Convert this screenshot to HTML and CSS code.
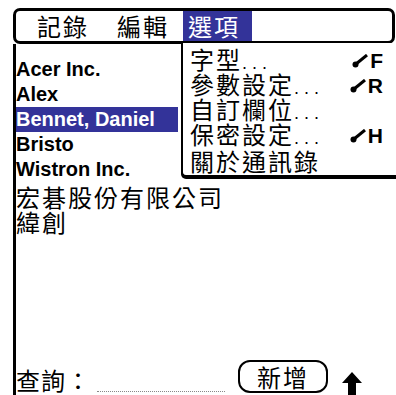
FILE: index.html
```html
<!DOCTYPE html>
<html lang="zh-Hant">
<head>
    <meta charset="UTF-8">
    <title>通訊錄</title>
    <link rel="stylesheet" href="styles.css">
</head>
<body>
    <div id="device">
        <div class="menubar">
            <span class="menu-title">記錄</span>
            <span class="menu-title">編輯</span>
            <span class="menu-title active">選項</span>
        </div>

        <div class="main">
            <ul class="list">
                <li>Acer Inc.</li>
                <li>Alex</li>
                <li class="selected">Bennet, Daniel</li>
                <li>Bristo</li>
                <li>Wistron Inc.</li>
                <li class="cjk">宏碁股份有限公司</li>
                <li class="cjk">緯創</li>
            </ul>

            <div class="footer">
                <span class="label">查詢：</span>
                <span class="field"></span>
                <button type="button" class="btn">新增</button>
                <svg class="arrow" width="20" height="23" viewBox="0 0 20 23">
                    <polygon points="10,0 20,11 14,11 14,23 6,23 6,11 0,11" fill="#000"/>
                </svg>
            </div>
        </div>

        <div class="dropdown">
            <div class="item">
                <span>字型<span class="dots">...</span></span>
                <span class="shortcut"><svg width="16" height="14" viewBox="0 0 16 14"><line x1="4" y1="10" x2="15" y2="1" stroke="#000" stroke-width="3"/><circle cx="3.5" cy="10.5" r="3" fill="#000"/></svg>F</span>
            </div>
            <div class="item">
                <span>參數設定<span class="dots">...</span></span>
                <span class="shortcut"><svg width="16" height="14" viewBox="0 0 16 14"><line x1="4" y1="10" x2="15" y2="1" stroke="#000" stroke-width="3"/><circle cx="3.5" cy="10.5" r="3" fill="#000"/></svg>R</span>
            </div>
            <div class="item">
                <span>自訂欄位<span class="dots">...</span></span>
            </div>
            <div class="item">
                <span>保密設定<span class="dots">...</span></span>
                <span class="shortcut"><svg width="16" height="14" viewBox="0 0 16 14"><line x1="4" y1="10" x2="15" y2="1" stroke="#000" stroke-width="3"/><circle cx="3.5" cy="10.5" r="3" fill="#000"/></svg>H</span>
            </div>
            <div class="item">
                <span>關於通訊錄</span>
            </div>
        </div>
    </div>
</body>
</html>
```

FILE: styles.css
```css
html, body {
    margin: 0;
    padding: 0;
    background-color: #fff;
}

#device {
    position: relative;
    width: 396px;
    height: 395px;
    overflow: hidden;
    font-family: "Noto Sans CJK TC", sans-serif;
    color: #000;
}

.menubar {
    box-sizing: border-box;
    height: 36px;
    margin: 8px 1px 0 13px;
    padding-left: 17px;
    border: 3px solid #000;
    border-radius: 7px;
    display: flex;
    gap: 20px;
    font-size: 24px;
    line-height: 30px;
    letter-spacing: 2px;
}

.menu-title {
    padding: 0 4px;
}

.menu-title.active {
    margin-left: -10px;
    padding: 0 12px 0 5px;
    background-color: #333399;
    color: #fff;
}

.main {
    box-sizing: border-box;
    height: 351px;
    margin-left: 13px;
    border-left: 3px solid #000;
    display: flex;
    flex-direction: column;
}

.list {
    list-style: none;
    margin: 0;
    padding: 13px 0 0 0;
    width: 162px;
}

.list li {
    height: 25px;
    line-height: 25px;
    font-family: "Liberation Sans", Arial, sans-serif;
    font-weight: bold;
    font-size: 20px;
    white-space: nowrap;
}

.list li.selected {
    background-color: #333399;
    color: #fff;
}

.list li.cjk {
    font-family: "Noto Sans CJK TC", sans-serif;
    font-weight: normal;
    font-size: 24px;
    letter-spacing: 2px;
    padding-top: 2px;
    height: 23px;
}

.footer {
    margin-top: auto;
    height: 37px;
    display: flex;
    align-items: flex-end;
}

.label {
    font-size: 24px;
    line-height: 28px;
    margin-bottom: 1px;
    letter-spacing: 1px;
}

.field {
    width: 128px;
    margin: 0 0 3px 6px;
    border-bottom: 1px dotted #888;
}

.btn {
    box-sizing: border-box;
    width: 90px;
    height: 33px;
    margin: 0 0 2px 13px;
    padding: 0;
    border: 2px solid #000;
    border-radius: 12px;
    background: #fff;
    font-family: "Noto Sans CJK TC", sans-serif;
    font-size: 24px;
    line-height: 27px;
    letter-spacing: 2px;
    color: #000;
}

.arrow {
    display: block;
    margin-left: 14px;
}

.dropdown {
    position: absolute;
    left: 181px;
    top: 43px;
    width: 220px;
    box-sizing: border-box;
    padding: 5px 18px 2px 7px;
    background: #fff;
    border-left: 2px solid #000;
    border-bottom: 2px solid #000;
    border-bottom-left-radius: 5px;
    box-shadow: 0 2px 0 #000;
    font-size: 24px;
    line-height: 25px;
    letter-spacing: 2px;
}

.item {
    display: flex;
    justify-content: space-between;
    align-items: center;
    height: 25px;
}

.dots {
    font-family: "Liberation Sans", Arial, sans-serif;
    font-size: 18px;
    letter-spacing: 5px;
}

.shortcut {
    display: flex;
    align-items: center;
    gap: 2px;
    font-family: "Liberation Sans", Arial, sans-serif;
    font-weight: bold;
    font-size: 21px;
    letter-spacing: 0;
}
```
